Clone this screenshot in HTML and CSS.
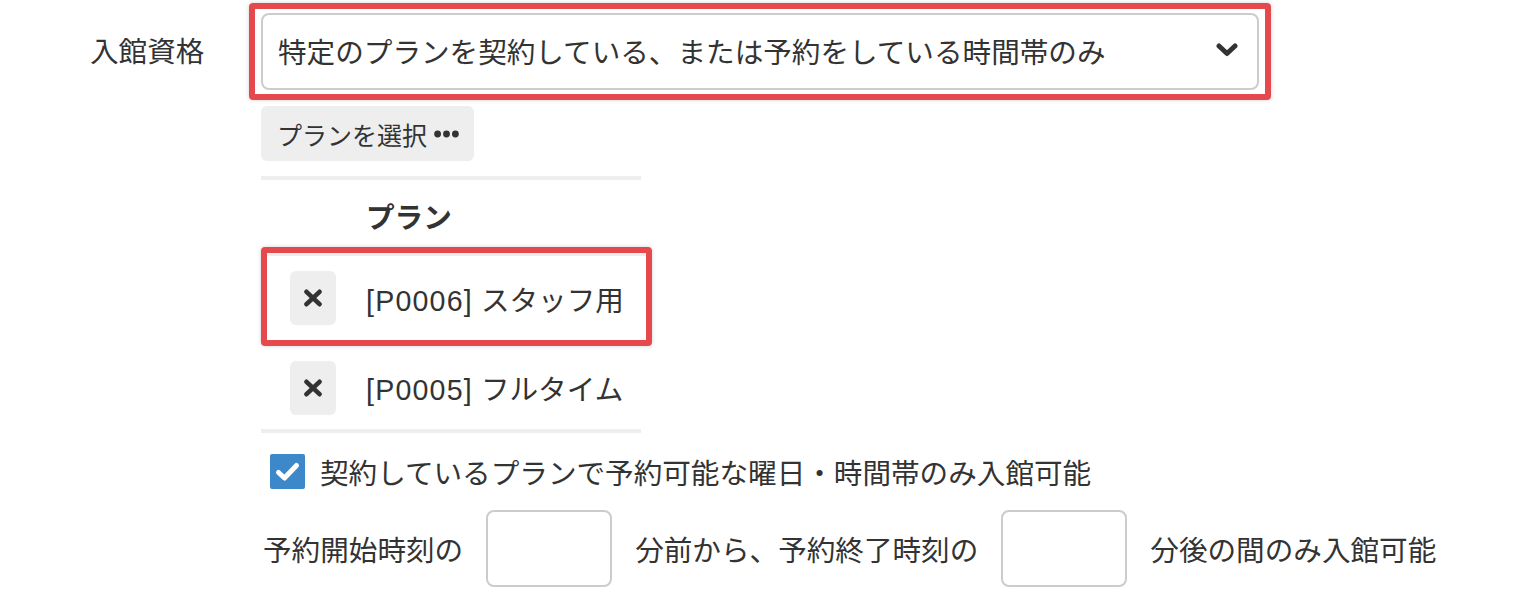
FILE: index.html
```html
<!DOCTYPE html>
<html lang="ja">
<head>
<meta charset="utf-8">
<link rel="stylesheet" href="styles.css">
</head>
<body>
<div class="form-row">
  <div class="form-label">入館資格</div>
  <div class="form-body">
    <div class="annot annot-select">
      <div class="select">
        <span>特定のプランを契約している、または予約をしている時間帯のみ</span>
        <svg class="chevron" width="22" height="14" viewBox="0 0 22 14"><polyline points="3,3 11,10.5 19,3" fill="none" stroke="#333" stroke-width="5" stroke-linecap="round" stroke-linejoin="round"/></svg>
      </div>
    </div>
    <div class="btn-plan">
      <span>プランを選択</span>
      <svg width="25" height="8" viewBox="0 0 25 8"><circle cx="3.6" cy="4" r="3.4" fill="#333"/><circle cx="12.5" cy="4" r="3.4" fill="#333"/><circle cx="21.4" cy="4" r="3.4" fill="#333"/></svg>
    </div>
    <div class="plan-table">
      <div class="plan-head">プラン</div>
      <div class="annot annot-row">
        <div class="plan-row first">
          <div class="btn-x"><svg width="20" height="18" viewBox="0 0 20 18"><path d="M3.5 2.8 L16.5 15.2 M16.5 2.8 L3.5 15.2" stroke="#333" stroke-width="4.6" stroke-linecap="round"/></svg></div>
          <div class="plan-name"><span class="code">[P0006]</span> スタッフ用</div>
        </div>
      </div>
      <div class="plan-row second">
        <div class="btn-x"><svg width="20" height="18" viewBox="0 0 20 18"><path d="M3.5 2.8 L16.5 15.2 M16.5 2.8 L3.5 15.2" stroke="#333" stroke-width="4.6" stroke-linecap="round"/></svg></div>
        <div class="plan-name"><span class="code">[P0005]</span> フルタイム</div>
      </div>
    </div>
    <div class="check-row">
      <div class="checkbox"><svg width="35" height="35" viewBox="0 0 35 35"><polyline points="8.5,18.5 14.5,24 26.5,11.5" fill="none" stroke="#fff" stroke-width="5" stroke-linecap="round" stroke-linejoin="round"/></svg></div>
      <span>契約しているプランで予約可能な曜日・時間帯のみ入館可能</span>
    </div>
    <div class="time-row">
      <span>予約開始時刻の</span>
      <div class="num-input"></div>
      <span>分前から、予約終了時刻の</span>
      <div class="num-input"></div>
      <span>分後の間のみ入館可能</span>
    </div>
  </div>
</div>
</body>
</html>
```
FILE: styles.css
```css
html, body {
  margin: 0;
  padding: 0;
  background: #fff;
}
body {
  font-family: "Liberation Sans", "Noto Sans CJK JP", sans-serif;
  font-size: 28.6px;
  color: #333;
}
.form-row {
  display: flex;
  padding-top: 13px;
}
.form-label {
  width: 261px;
  flex-shrink: 0;
  box-sizing: border-box;
  padding-left: 90px;
  height: 73px;
  display: flex;
  align-items: center;
}
.form-body {
  width: 998px;
  flex-shrink: 0;
  display: flex;
  flex-direction: column;
}
.annot {
  border: 6px solid #e5484d;
  border-radius: 4px;
  box-shadow: 0 0 4px rgba(0, 0, 0, 0.18);
}
.annot-select {
  padding: 4px 6px;
  margin: -10px -12px;
}
.select {
  height: 77px;
  box-sizing: border-box;
  border: 2px solid #ccc;
  border-radius: 8px;
  background: #fff;
  display: flex;
  align-items: center;
  justify-content: space-between;
  padding: 0 19px 3px 15px;
}
.btn-plan {
  margin-top: 16px;
  align-self: flex-start;
  height: 55px;
  box-sizing: border-box;
  padding: 0 15px 0 16px;
  background: #eee;
  border-radius: 6px;
  font-size: 25px;
  display: flex;
  align-items: center;
  gap: 7px;
}
.plan-table {
  margin-top: 15px;
  width: 380px;
  border-top: 4px solid #eee;
  border-bottom: 4px solid #eee;
}
.plan-head {
  height: 70px;
  padding-left: 105px;
  display: flex;
  align-items: center;
  font-weight: bold;
}
.annot-row {
  margin: -3px -11px 0 0;
}
.plan-row {
  display: flex;
  align-items: center;
}
.plan-row.first {
  height: 87px;
  box-sizing: border-box;
  border-top: 3px solid #eee;
  padding-left: 23px;
}
.plan-row.second {
  height: 83px;
  padding-left: 29px;
}
.btn-x {
  width: 46px;
  height: 54px;
  flex-shrink: 0;
  background: #eee;
  border-radius: 6px;
  display: flex;
  align-items: center;
  justify-content: center;
}
.plan-name {
  margin-left: 30px;
  white-space: nowrap;
}
.code {
  letter-spacing: 1.2px;
}
.check-row {
  margin-top: 18px;
  display: flex;
  align-items: center;
  gap: 15px;
  padding-left: 9px;
  white-space: nowrap;
}
.checkbox {
  width: 35px;
  height: 35px;
  flex-shrink: 0;
  background: #3d88c9;
  border-radius: 2px;
  display: flex;
}
.time-row {
  margin-top: 18px;
  display: flex;
  align-items: center;
  gap: 23px;
  padding-left: 2px;
  white-space: nowrap;
}
.time-row > span {
  flex-shrink: 0;
}
.num-input {
  width: 126px;
  height: 77px;
  flex-shrink: 0;
  box-sizing: border-box;
  border: 2px solid #ccc;
  border-radius: 8px;
}
```
